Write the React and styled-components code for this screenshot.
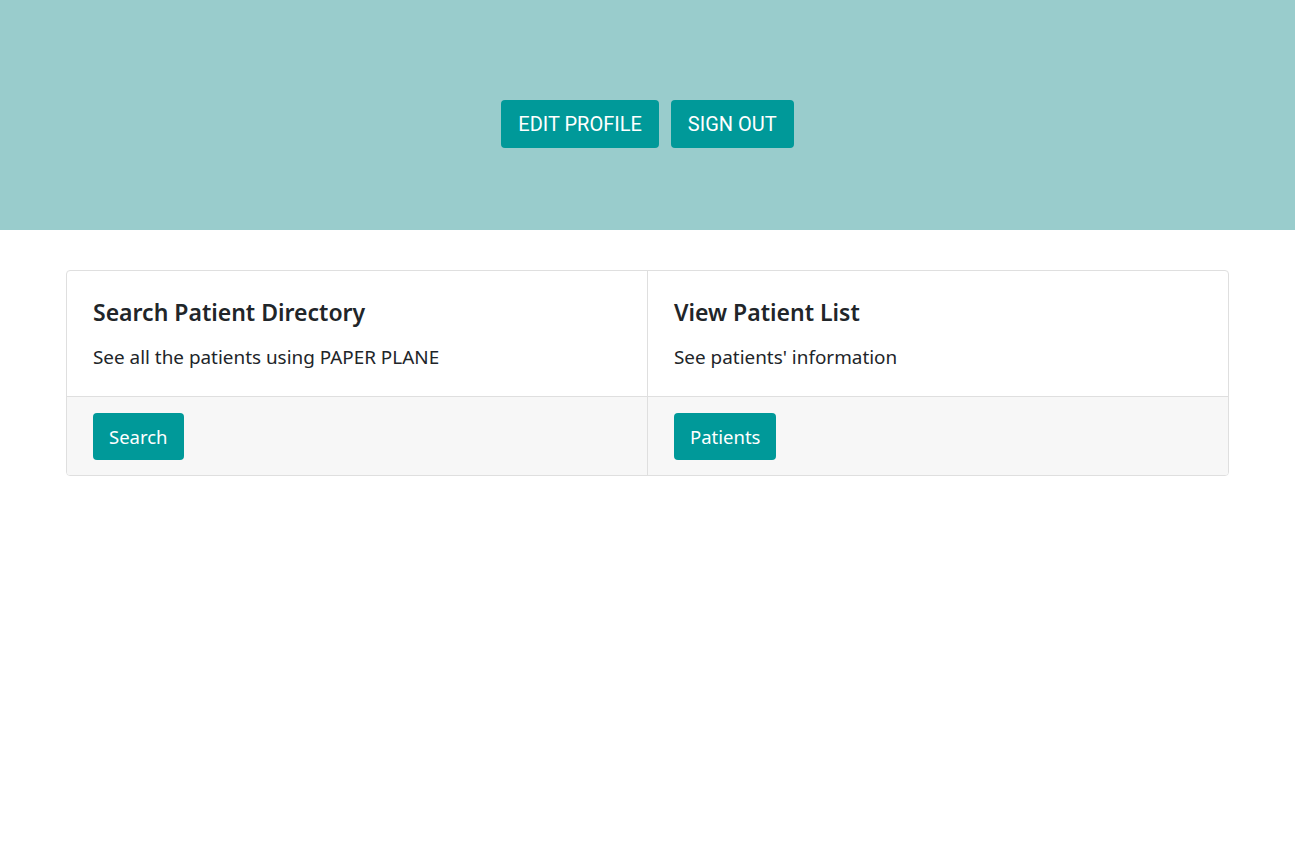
import React from "react";
import styled, { createGlobalStyle } from "styled-components";

const GlobalStyle = createGlobalStyle`
  * { box-sizing: border-box; }
  body {
    margin: 0;
    background: #fff;
    color: #212529;
    font-family: "Noto Sans", "Open Sans", sans-serif;
  }
`;

const Header = styled.header`
  height: 230px;
  background: #99cccc;
  display: flex;
  align-items: center;
  justify-content: center;
  gap: 12px;
  padding-top: 18px;
`;

const HeaderButton = styled.button`
  height: 48px;
  padding: 0 17px;
  border: none;
  border-radius: 4px;
  background: #009999;
  color: #fff;
  font-family: Roboto, "Liberation Sans", sans-serif;
  font-size: 20px;
  font-weight: 400;
  text-transform: uppercase;
  cursor: pointer;
`;

const Main = styled.main`
  padding: 40px 66px;
`;

const CardGroup = styled.div`
  display: grid;
  grid-template-columns: 580px 1fr;
  border: 1px solid #dfdfdf;
  border-radius: 4px;
  overflow: hidden;
`;

const Card = styled.div`
  display: flex;
  flex-direction: column;
  border-left: ${(p) => (p.$first ? "none" : "1px solid #dfdfdf")};
`;

const CardBody = styled.div`
  padding: 26px 25px 25px 26px;
  height: 125px;
`;

const Title = styled.h5`
  margin: 0 0 17px;
  font-size: 23px;
  font-weight: 600;
  line-height: 30px;
  color: #212529;
`;

const Text = styled.p`
  margin: 0;
  font-size: 18.9px;
  line-height: 27px;
`;

const CardFooter = styled.div`
  border-top: 1px solid #dfdfdf;
  background: #f7f7f7;
  padding: 16px 25px 15px 26px;
`;

const ActionButton = styled.button`
  height: 47px;
  padding: 0 16px;
  border: none;
  border-radius: 4px;
  background: #009999;
  color: #fff;
  font-family: "Noto Sans", "Open Sans", sans-serif;
  font-size: 18.5px;
  cursor: pointer;
`;

const cards = [
  {
    title: "Search Patient Directory",
    text: "See all the patients using PAPER PLANE",
    action: "Search",
  },
  {
    title: "View Patient List",
    text: "See patients' information",
    action: "Patients",
  },
];

export default function App() {
  return (
    <>
      <GlobalStyle />
      <Header>
        <HeaderButton>Edit Profile</HeaderButton>
        <HeaderButton>Sign Out</HeaderButton>
      </Header>
      <Main>
        <CardGroup>
          {cards.map((c, i) => (
            <Card key={c.title} $first={i === 0}>
              <CardBody>
                <Title>{c.title}</Title>
                <Text>{c.text}</Text>
              </CardBody>
              <CardFooter>
                <ActionButton>{c.action}</ActionButton>
              </CardFooter>
            </Card>
          ))}
        </CardGroup>
      </Main>
    </>
  );
}
